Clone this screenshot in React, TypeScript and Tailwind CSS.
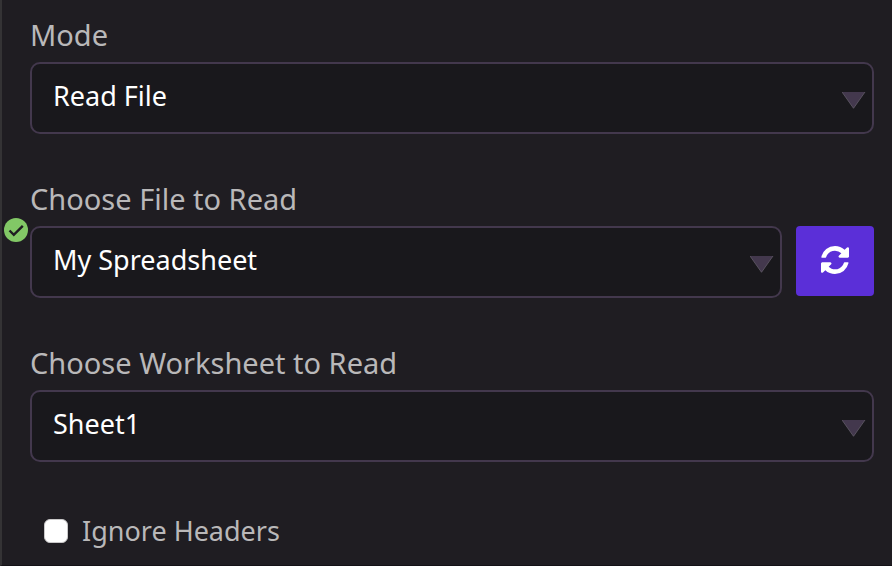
import type { ReactNode } from "react";

type SelectFieldProps = {
  id: string;
  label: string;
  options: string[];
  valid?: boolean;
  action?: ReactNode;
};

function RefreshIcon() {
  return (
    <svg viewBox="0 0 1536 1536" aria-hidden="true" fill="currentColor" className="size-7">
      <path d="M1511 928q0 5-1 7-64 268-268 434.5t-478 166.5q-146 0-282.5-55t-243.5-157l-129 129q-19 19-45 19t-45-19-19-45v-448q0-26 19-45t45-19h448q26 0 45 19t19 45-19 45l-137 137q71 66 161 102t187 36q134 0 250-65t186-179q11-17 53-117 8-23 30-23h192q13 0 22.5 9.5t9.5 22.5zm25-800v448q0 26-19 45t-45 19h-448q-26 0-45-19t-19-45 19-45l138-138q-148-137-349-137-134 0-250 65t-186 179q-11 17-53 117-8 23-30 23h-199q-13 0-22.5-9.5t-9.5-22.5v-7q65-268 270-434.5t480-166.5q146 0 284 55.5t245 156.5l130-129q19-19 45-19t45 19 19 45z" />
    </svg>
  );
}

function SelectField({ id, label, options, valid, action }: SelectFieldProps) {
  return (
    <div>
      <label htmlFor={id} className="mb-[10px] block text-[29px] leading-[34px] text-[#b9b8b9]">
        {label}
      </label>
      <div className="relative flex items-start gap-[14px]">
        {valid && (
          <svg
            viewBox="0 0 24 24"
            role="img"
            aria-label="Valid"
            className="absolute -top-2 -left-[26px] size-6"
          >
            <circle cx="12" cy="12" r="12" fill="#82c866" />
            <path d="M5.5 12.5l4.3 4.3 9-9" fill="none" stroke="#1f1d22" strokeWidth="2.4" />
          </svg>
        )}
        <div className="relative min-w-0 flex-1">
          <select
            id={id}
            className="block h-[72px] w-full appearance-none rounded-[10px] border-2 border-[#43384d] bg-[#19181c] pr-12 pb-1 pl-[21px] text-[27px] text-white"
          >
            {options.map((option) => (
              <option key={option}>{option}</option>
            ))}
          </select>
          <svg
            viewBox="0 0 24 17"
            aria-hidden="true"
            className="pointer-events-none absolute top-[30px] right-2 h-[17px] w-6"
          >
            <path d="M0 0h23L11.5 16.3z" fill="#43384d" />
            <path d="M0 0L11.5 16.3 23 0" fill="none" stroke="#6a6470" strokeWidth="0.7" />
          </svg>
        </div>
        {action}
      </div>
    </div>
  );
}

export default function App() {
  return (
    <main className="min-h-screen border-b border-l-2 border-b-[#141217] border-l-[#343335] bg-[#1f1d22] pt-[18px] pr-[18px] pl-7 font-['Noto_Sans',sans-serif]">
      <form className="flex flex-col gap-12">
        <SelectField id="mode" label="Mode" options={["Read File"]} />
        <SelectField
          id="file"
          label="Choose File to Read"
          options={["My Spreadsheet"]}
          valid
          action={
            <button
              type="button"
              aria-label="Refresh files"
              className="flex h-[70px] w-[78px] items-center justify-center rounded bg-[#5b2fd8] pb-0.5 text-white"
            >
              <RefreshIcon />
            </button>
          }
        />
        <SelectField id="worksheet" label="Choose Worksheet to Read" options={["Sheet1"]} />
        <label className="flex items-center gap-[14px] pt-px pl-[14px] text-[27px] leading-10 text-[#b9b8b9]">
          <input
            type="checkbox"
            className="size-6 appearance-none rounded-[6px] border border-[#c9c8c9] bg-white"
          />
          Ignore Headers
        </label>
      </form>
    </main>
  );
}
